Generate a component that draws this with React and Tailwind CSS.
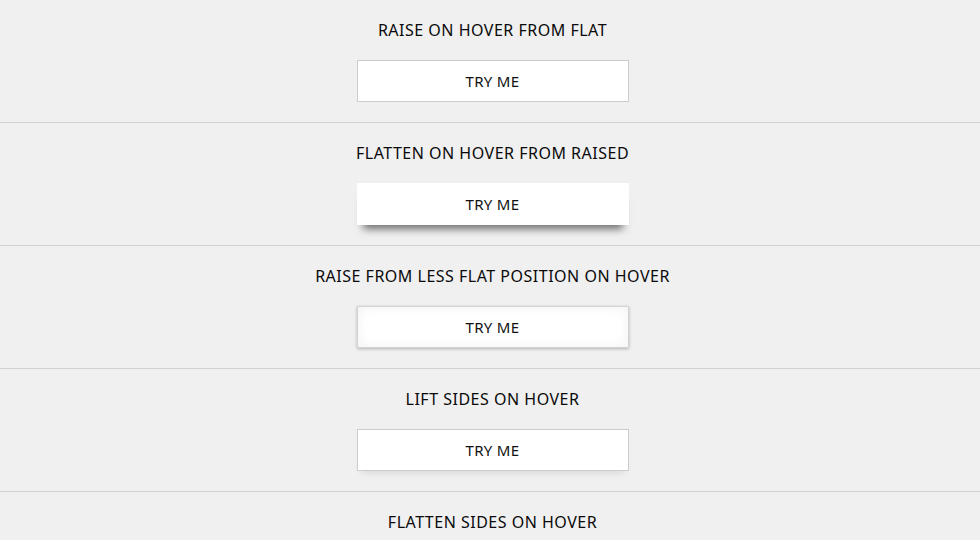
import React from "react";

const sections = [
  {
    title: "RAISE ON HOVER FROM FLAT",
    btn: "border border-[#cccccc]",
  },
  {
    title: "FLATTEN ON HOVER FROM RAISED",
    btn: "shadow-[0_10px_8px_-6px_rgba(0,0,0,0.55)]",
  },
  {
    title: "RAISE FROM LESS FLAT POSITION ON HOVER",
    btn: "border border-[#d4d4d4] shadow-[inset_0_0_12px_rgba(0,0,0,0.06),0_1px_3px_rgba(0,0,0,0.25)]",
  },
  {
    title: "LIFT SIDES ON HOVER",
    btn: "border border-[#cccccc] shadow-[0_6px_8px_-5px_rgba(0,0,0,0.12)]",
  },
  {
    title: "FLATTEN SIDES ON HOVER",
    btn: "border border-[#cccccc]",
  },
];

export default function App() {
  return (
    <div
      className="min-h-screen h-[540px] overflow-hidden bg-[#f0f0f0] text-[#0a0a0a]"
      style={{ fontFamily: '"Noto Sans", "Open Sans", sans-serif' }}
    >
      {sections.map((s) => (
        <section
          key={s.title}
          className="flex flex-col items-center pl-[5px] pt-[19px] pb-[20px] border-b border-[#d2d2d2]"
        >
          <h2 className="h-[22px] leading-[22px] text-[16px] tracking-[0.5px] font-normal">
            {s.title}
          </h2>
          <button
            className={`mt-[19px] w-[272px] h-[42px] bg-white text-[15px] text-[#111] tracking-[0.3px] ${s.btn}`}
          >
            TRY ME
          </button>
        </section>
      ))}
    </div>
  );
}
